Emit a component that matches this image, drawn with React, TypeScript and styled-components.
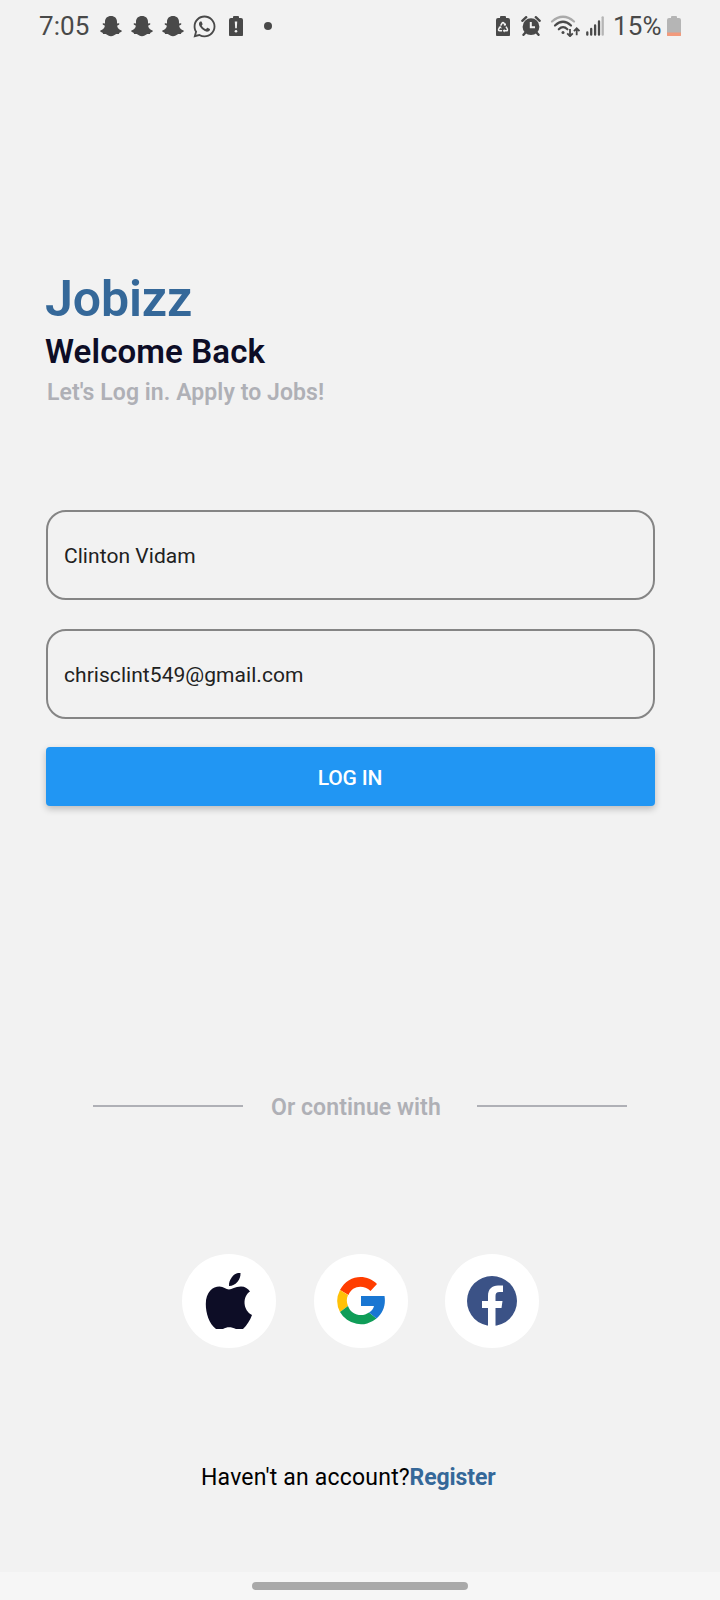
import React from "react";
import styled, { createGlobalStyle } from "styled-components";
import { FaWhatsapp } from "react-icons/fa";

const GlobalStyle = createGlobalStyle`
  * { box-sizing: border-box; }
  body { margin: 0; background: #f2f2f2; font-family: Roboto, "Liberation Sans", sans-serif; }
  svg { display: block; flex: none; }
`;

const Screen = styled.div`
  display: flex;
  flex-direction: column;
  width: 720px;
  height: 1600px;
  background: #f2f2f2;
`;

const StatusBar = styled.header`
  display: flex;
  justify-content: space-between;
  height: 52px;
  padding: 0 39px 0 39px;
  color: #494949;
`;

const StatusGroup = styled.div`
  display: flex;
  align-items: center;
`;

const StatusText = styled.span<{ $width: number; $spacing: number }>`
  width: ${(p) => p.$width}px;
  font-size: 26px;
  font-weight: 400;
  line-height: 30px;
  letter-spacing: ${(p) => p.$spacing}px;
  white-space: nowrap;
`;

const StatusIcon = styled.span<{ $before: number }>`
  display: flex;
  margin-left: ${(p) => p.$before}px;
`;

const Heading = styled.section`
  display: flex;
  flex-direction: column;
  padding: 217px 0 0 45px;
`;

const Brand = styled.h1`
  margin: 0;
  font-size: 50px;
  font-weight: 650;
  line-height: 60px;
  letter-spacing: -0.1px;
  color: #356899;
`;

const Title = styled.h2`
  margin: 3px 0 0;
  font-size: 33px;
  font-weight: 650;
  line-height: 40px;
  letter-spacing: 0.12px;
  color: #0d0d26;
`;

const Subtitle = styled.p`
  margin: 7px 0 0 2px;
  font-size: 23px;
  font-weight: 600;
  line-height: 28px;
  letter-spacing: 0.07px;
  color: #afb0b6;
`;

const Form = styled.form`
  display: flex;
  flex-direction: column;
  width: 609px;
  margin: 103px 0 0 46px;
`;

const Field = styled.input`
  height: 90px;
  margin: 0 0 29px;
  padding: 2px 16px 0;
  border: 2px solid #858585;
  border-radius: 20px;
  outline: none;
  background: transparent;
  font-family: inherit;
  font-size: 21px;
  letter-spacing: 0.05px;
  color: #212121;
`;

const SubmitButton = styled.button`
  height: 59px;
  margin-top: -1px;
  padding: 2px 1px 0 0;
  border: 0;
  border-radius: 4px;
  background: #2196f3;
  box-shadow: 0 3px 7px rgba(0, 0, 0, 0.23);
  font-family: inherit;
  font-size: 21px;
  font-weight: 500;
  letter-spacing: -0.2px;
  color: #fff;
`;

const Divider = styled.div`
  display: flex;
  align-items: center;
  height: 30px;
  margin: 285px 93px 0;
`;

const Rule = styled.span`
  width: 150px;
  height: 2px;
  margin-bottom: 1px;
  background: #afb0b6;
`;

const DividerText = styled.span`
  width: 234px;
  padding: 3px 0 0 28px;
  font-size: 23px;
  font-weight: 600;
  line-height: 31px;
  letter-spacing: 0.07px;
  color: #afb0b6;
  white-space: nowrap;
`;

const Providers = styled.div`
  display: flex;
  gap: 37.5px;
  margin: 133px 0 0 182px;
`;

const Provider = styled.button`
  display: flex;
  align-items: center;
  justify-content: center;
  width: 94px;
  height: 94px;
  padding: 0;
  border: 0;
  border-radius: 50%;
  background: #fff;
`;

const RegisterRow = styled.p`
  display: flex;
  margin: 116px 0 0 201px;
  font-size: 23px;
  line-height: 28px;
  color: #000;
  white-space: nowrap;
`;

const Prompt = styled.span`
  width: 208.5px;
  letter-spacing: 0.2px;
`;

const RegisterLink = styled.a`
  font-weight: 700;
  letter-spacing: -0.1px;
  color: #356899;
`;

const NavigationBar = styled.footer`
  display: flex;
  justify-content: center;
  height: 28px;
  margin-top: auto;
  padding-top: 10px;
  background: #f6f6f6;
`;

const HomeHandle = styled.span`
  width: 216px;
  height: 8px;
  border-radius: 4px;
  background: #a9a9a9;
`;

const batteryShape = "M4 2V1Q4 0 5 0h4Q10 0 10 1v1H12q2 0 2 2v14.500q0 2-2 2H2q-2 0-2-2V4q0-2 2-2z";

const GhostIcon = () => (
  <svg width="22" height="22" viewBox="0 0 22 22">
    <path
      d="M11 1c3.700 0 6 2.400 6 5.700v1.900l1.700-.4q1.300.6.200 1.500l-1.800 1c.5 2.600 2 4 4.400 4.700.7.500.4 1.500-2.100 2.300l-.5 1.200-2.700.2C14.500 20 13 21.300 11 21.300S7.500 20 5.800 19.100l-2.700-.2-.5-1.200C.1 16.900-.2 15.900.5 15.400c2.400-.7 3.900-2.100 4.400-4.700l-1.800-1Q2 8.800 3.300 8.200L5 8.600V6.700C5 3.400 7.300 1 11 1z"
      fill="currentColor"
    />
  </svg>
);

const BatteryAlert = () => (
  <svg width="14" height="20.500" viewBox="0 0 14 20.500">
    <path d={batteryShape} fill="currentColor" />
    <path d="M5.800 5.500h2.400l-.4 6.800H6.200z" fill="#f2f2f2" />
    <circle cx="7" cy="15.200" r="1.300" fill="#f2f2f2" />
  </svg>
);

const BatterySaver = () => (
  <svg width="14" height="20.500" viewBox="0 0 14 20.500">
    <path d={batteryShape} fill="currentColor" />
    <g fill="none" stroke="#f2f2f2" strokeWidth="1.500">
      <path d="M4.600 9.600 6.200 7q.8-1.100 1.600 0l1.300 2.200" />
      <path d="M10 10.700l1.300 2.300q.6 1.700-.9 1.800H8" />
      <path d="M6 14.800H3.600q-1.500-.1-.9-1.700l1.300-2.300" />
    </g>
    <path d="M7.500 9.500h2.500V7zM8.600 13v3.600l-2-1.800zM2.400 11l2.600-.7.600 2.500z" fill="#f2f2f2" />
  </svg>
);

const BatteryLevel = () => (
  <svg width="14" height="20.500" viewBox="0 0 14 20.500">
    <path d={batteryShape} fill="#b5b5b5" />
    <path d="M0 16.500h14v2q0 2-2 2H2q-2 0-2-2z" fill="#f29a7c" />
  </svg>
);

const AlarmIcon = () => (
  <svg width="20" height="20" viewBox="0 0 20 20">
    <circle cx="10" cy="10.700" r="8.400" fill="currentColor" />
    <path d="M1.300 4.800 5.200 1.200M18.700 4.800l-3.900-3.600M4.500 16.500l-2 2.300M15.500 16.500l2 2.300" stroke="currentColor" strokeWidth="2.400" strokeLinecap="round" />
    <path d="M9.800 6v5.200h4.200" fill="none" stroke="#f2f2f2" strokeWidth="2" />
  </svg>
);

const WifiIcon = () => (
  <svg width="30" height="22" viewBox="0 0 30 22">
    <g fill="none" strokeWidth="2.200" strokeLinecap="round">
      <path d="M2 6.500q11-9.500 22 0" stroke="#aaa" />
      <path d="M5 10.500q8-7.500 16 0M8.800 14.300q4.200-4.200 8.600 0" stroke="currentColor" />
    </g>
    <circle cx="13" cy="17.500" r="1.500" fill="currentColor" />
    <path d="M20 14v7M17.200 18.400l2.800 2.800 2.800-2.800M26.700 20.300v-7M23.900 16.100l2.800-2.800 2.800 2.800" fill="none" stroke="currentColor" strokeWidth="1.800" />
  </svg>
);

const SignalIcon = () => (
  <svg width="18" height="20" viewBox="0 0 18 20">
    <g strokeWidth="2.300" strokeLinecap="round">
      <path d="M1.300 18.700v-2.200M5.200 18.700V13M9.100 18.700V9.500M13 18.700V5.500" stroke="currentColor" />
      <path d="M16.700 18.700V1.300" stroke="#b5b5b5" />
    </g>
  </svg>
);

const DotIcon = () => (
  <svg width="8" height="8" viewBox="0 0 8 8">
    <circle cx="4" cy="4" r="4" fill="currentColor" />
  </svg>
);

const AppleLogo = () => (
  <svg width="49" height="56" viewBox="0 0 49 56">
    <g fill="#0d0d26">
      <path d="M35.500 0C36 6 31 13 24 13 23.500 6.500 29 .5 33 0z" />
      <path d="M24 16.500c3 0 6-3 12-3 4 0 7 2 9 5-8 5-7 19 2 23.500-2 5.500-5 10-9 14h-7c-5-2.200-9-2.200-13 0h-7C4 51 .8 40 .8 31c0-12 7-17.500 13.700-17.500 4 0 6.500 3 9.500 3z" />
    </g>
  </svg>
);

const GoogleLogo = () => (
  <svg width="48" height="48" viewBox="0 0 48 48">
    <path d="M3 13C11-2 29-4 40 7l-6.500 7C26 7 15 9 11.500 18z" fill="#ff3d00" />
    <path d="M3 13A24 24 0 0 0 3 35l8-6a14 14 0 0 1 0-11z" fill="#ffc107" />
    <path d="M3 35a24 24 0 0 0 36.500 6.500L32 35.500C25 40.500 14 38 11 29z" fill="#0f9d58" />
    <path d="M24 19h23.500c1.500 9-1.500 17-8 22.500L32 35.500q4-2.500 5-6.500H24z" fill="#1976d2" />
  </svg>
);

const FacebookLogo = () => (
  <svg width="50" height="50" viewBox="0 0 50 50">
    <circle cx="25" cy="25" r="25" fill="#3b5286" />
    <path d="M21 50V32h-6v-7h6v-5c0-7 4-10.500 10-10.500h5v6.500h-3.500c-3 0-4 1.500-4 4v5h7l-1 7h-6v18z" fill="#fff" />
  </svg>
);

export default function App() {
  return (
    <Screen>
      <GlobalStyle />
      <StatusBar>
        <StatusGroup>
          <StatusText $width={52} $spacing={0.1}>7:05</StatusText>
          <StatusIcon $before={9}><GhostIcon /></StatusIcon>
          <StatusIcon $before={9}><GhostIcon /></StatusIcon>
          <StatusIcon $before={9}><GhostIcon /></StatusIcon>
          <StatusIcon $before={8}><FaWhatsapp size={25} /></StatusIcon>
          <StatusIcon $before={11.5}><BatteryAlert /></StatusIcon>
          <StatusIcon $before={21}><DotIcon /></StatusIcon>
        </StatusGroup>
        <StatusGroup>
          <StatusIcon $before={0}><BatterySaver /></StatusIcon>
          <StatusIcon $before={11}><AlarmIcon /></StatusIcon>
          <StatusIcon $before={9}><WifiIcon /></StatusIcon>
          <StatusIcon $before={6}><SignalIcon /></StatusIcon>
          <StatusIcon $before={9}><StatusText $width={54} $spacing={0.1}>15%</StatusText></StatusIcon>
          <StatusIcon $before={0}><BatteryLevel /></StatusIcon>
        </StatusGroup>
      </StatusBar>

      <Heading>
        <Brand>Jobizz</Brand>
        <Title>Welcome Back</Title>
        <Subtitle>Let's Log in. Apply to Jobs!</Subtitle>
      </Heading>

      <Form>
        <Field defaultValue="Clinton Vidam" aria-label="Name" />
        <Field defaultValue="chrisclint549@gmail.com" aria-label="Email" />
        <SubmitButton type="button">LOG IN</SubmitButton>
      </Form>

      <Divider>
        <Rule />
        <DividerText>Or continue with</DividerText>
        <Rule />
      </Divider>

      <Providers>
        <Provider aria-label="Apple"><AppleLogo /></Provider>
        <Provider aria-label="Google"><GoogleLogo /></Provider>
        <Provider aria-label="Facebook"><FacebookLogo /></Provider>
      </Providers>

      <RegisterRow>
        <Prompt>Haven't an account?</Prompt>
        <RegisterLink>Register</RegisterLink>
      </RegisterRow>

      <NavigationBar>
        <HomeHandle />
      </NavigationBar>
    </Screen>
  );
}
